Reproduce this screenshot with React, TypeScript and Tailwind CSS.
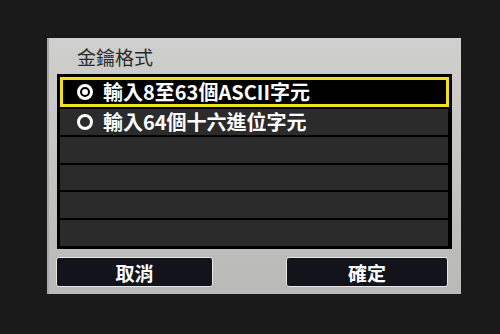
import React from "react";

const font = { fontFamily: '"Noto Sans CJK TC", "Noto Sans", sans-serif' };

function Radio({ checked }: { checked: boolean }) {
  return (
    <span className="flex h-[16px] w-[16px] shrink-0 items-center justify-center rounded-full border-[3px] border-white">
      {checked && <span className="h-[6px] w-[6px] rounded-full bg-white" />}
    </span>
  );
}

export default function App() {
  const rows = [
    { label: "輸入8至63個ASCII字元", checked: true },
    { label: "輸入64個十六進位字元", checked: false },
    null,
    null,
    null,
    null,
  ];

  return (
    <div className="h-[334px] w-[500px] overflow-hidden bg-[#1a1a1a] pl-[47px] pt-[38px]" style={font}>
      <div className="flex h-[256px] w-[414px] flex-col bg-gradient-to-b from-[#cfcfcd] to-[#b9b9b7] shadow-[inset_2px_0_0_#a9a9a9]">
        <div className="flex h-[36px] items-center pl-[30px] pt-[1px] text-[19px] leading-none text-[#2b2b2b]">
          金鑰格式
        </div>
        <div className="ml-[10px] flex h-[175px] w-[395px] flex-col gap-[2px] bg-black p-[3px]">
          {rows.map((r, i) =>
            r && r.checked ? (
              <div
                key={i}
                className="flex h-[30px] items-center gap-[10px] border-[3px] border-[#f2e21c] bg-black pl-[14px] text-[20px] font-bold leading-none text-white"
              >
                <Radio checked />
                <span>{r.label}</span>
              </div>
            ) : (
              <div
                key={i}
                className="mr-[1px] flex h-[26px] items-center gap-[10px] bg-[#2b2b2b] pl-[17px] text-[20px] font-bold leading-none text-white"
              >
                {r && <Radio checked={false} />}
                {r && <span>{r.label}</span>}
              </div>
            )
          )}
        </div>
        <div className="mt-[8px] flex gap-[73px] pl-[9px]">
          <button className="flex h-[30px] w-[157px] items-center justify-center rounded-[3px] border border-[#e6e6e6] bg-[#13131c] text-[19px] font-bold leading-none text-white">
            取消
          </button>
          <button className="flex h-[30px] w-[162px] items-center justify-center rounded-[3px] border border-[#e6e6e6] bg-[#13131c] text-[19px] font-bold leading-none text-white">
            確定
          </button>
        </div>
      </div>
    </div>
  );
}
